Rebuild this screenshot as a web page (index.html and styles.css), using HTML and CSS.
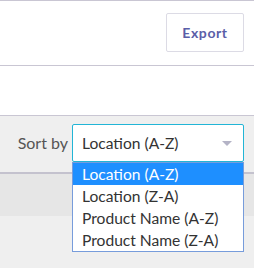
FILE: index.html
```html
<!DOCTYPE html>
<html lang="en">
<head>
  <meta charset="UTF-8" />
  <title>Inventory</title>
  <link rel="stylesheet" href="styles.css">
</head>
<body>
  <div class="cabecalho">
    <button class="botao-export">Export</button>
  </div>
  <div class="vazio"></div>

  <div class="barra-ordem">
    <span class="rotulo">Sort by</span>
    <div class="seletor">
      <div class="seletor-caixa">
        <span>Location (A-Z)</span>
        <span class="seta"></span>
      </div>
      <ul class="lista-opcoes">
        <li class="ativa">Location (A-Z)</li>
        <li>Location (Z-A)</li>
        <li>Product Name (A-Z)</li>
        <li>Product Name (Z-A)</li>
      </ul>
    </div>
  </div>
  <div class="faixa"></div>
</body>
</html>
```

FILE: styles.css
```css
* {
  margin: 0; padding: 0; box-sizing: border-box;
}
body {
  background: #efefef;
  font-family: 'Lato', 'Liberation Sans', sans-serif;
  width: 254px;
  min-height: 268px;
}

.cabecalho {
  background: #fff;
  border-top: 1px solid #c9c6d3;
  border-bottom: 1px solid #c9c6d3;
  height: 66px;
  display: flex;
  justify-content: flex-end;
  align-items: flex-start;
  padding: 12px 10px 0 0;
}

.botao-export {
  width: 78px;
  height: 39px;
  background: #fff;
  border: 1px solid #dcdbe5;
  border-radius: 2px;
  font-family: 'Lato', sans-serif;
  font-weight: 700;
  font-size: 14px;
  letter-spacing: 0.6px;
  color: #5a5ea8;
}

.vazio {
  background: #fff;
  height: 50px;
  border-bottom: 1px solid #c9c6d3;
}

.barra-ordem {
  height: 58px;
  border-bottom: 2px solid #c4c2ce;
  display: flex;
  justify-content: flex-end;
  align-items: flex-start;
  padding: 8px 10px 0 0;
  gap: 4px;
}

.rotulo {
  font-size: 16px;
  color: #555;
  line-height: 38px;
}

.seletor {
  position: relative;
  width: 172px;
}

.seletor-caixa {
  height: 38px;
  background: #fff;
  border: 1px solid #22b5d6;
  border-radius: 2px;
  display: flex;
  align-items: center;
  justify-content: space-between;
  padding: 0 10px 0 9px;
  font-size: 15.6px;
  color: #333;
}

.seta {
  width: 0;
  height: 0;
  border-left: 5px solid transparent;
  border-right: 5px solid transparent;
  border-top: 5px solid #b4b3c6;
  margin-right: 1px;
}

.lista-opcoes {
  position: absolute;
  top: 38px;
  left: 0;
  width: 172px;
  list-style: none;
  background: #fff;
  border: 1px solid #779cdb;
  z-index: 10;
}

.lista-opcoes li {
  height: 22px;
  line-height: 22px;
  padding-left: 9px;
  font-size: 15.6px;
  color: #333;
}

.lista-opcoes li.ativa {
  background: #1e8fff;
  color: #fff;
}

.faixa {
  height: 42px;
  background: #e6e6e6;
}
```
